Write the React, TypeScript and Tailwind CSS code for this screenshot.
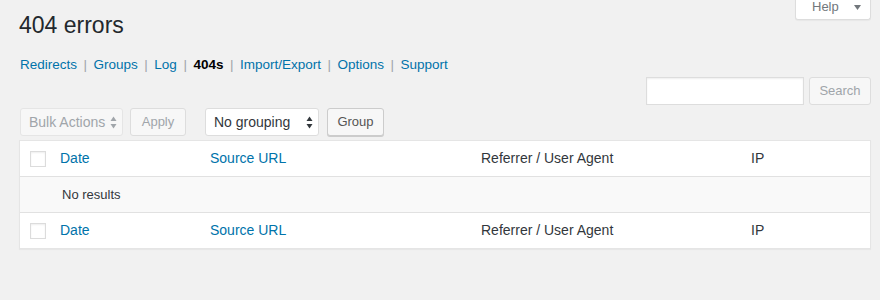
const font = { fontFamily: '"Liberation Sans", Arial, sans-serif' };

const tabs = [
  { label: "Redirects" },
  { label: "Groups" },
  { label: "Log" },
  { label: "404s", current: true },
  { label: "Import/Export" },
  { label: "Options" },
  { label: "Support" },
];

function Arrows({ color }: { color: string }) {
  return (
    <svg width="7" height="13" viewBox="0 0 7 13" className="shrink-0">
      <path d="M3.5 0.5 L6.5 5 L0.5 5 Z" fill={color} />
      <path d="M0.5 8 L6.5 8 L3.5 12.5 Z" fill={color} />
    </svg>
  );
}

function HeadRow({ top }: { top?: boolean }) {
  return (
    <div
      className={`flex h-[36px] items-center text-[14px] ${
        top ? "border-b border-[#e1e1e1]" : "border-t border-[#e1e1e1]"
      }`}
    >
      <div className="flex w-[40px] shrink-0 pl-[10px]">
        <span className="h-[16px] w-[16px] border border-[#dcdcdc] bg-white shadow-[inset_0_1px_2px_rgba(0,0,0,0.07)]" />
      </div>
      <div className="w-[150px] shrink-0 text-[#0073aa]">Date</div>
      <div className="w-[271px] shrink-0 text-[#0073aa]">Source URL</div>
      <div className="w-[270px] shrink-0 text-[#32373c]">Referrer / User Agent</div>
      <div className="flex-1 text-[#32373c]">IP</div>
    </div>
  );
}

export default function App() {
  return (
    <div className="min-h-[300px] bg-[#f1f1f1] pl-[19px] pr-[9px]" style={font}>
      <div className="flex items-start justify-between">
        <h1 className="mt-[10px] text-[23px] leading-[30px] font-normal text-[#23282d]">404 errors</h1>
        <div className="-mt-[3px] flex h-[23px] w-[76px] items-end rounded-b-[3px] border border-t-0 border-[#dddddd] bg-white pb-[4px] pl-[16px] text-[13px] leading-[16px] text-[#72777c] shadow-[0_1px_1px_rgba(0,0,0,0.04)]">
          <span>Help</span>
          <svg width="7" height="5" viewBox="0 0 7 5" className="mb-[5px] ml-[15px]">
            <path d="M0 0 L7 0 L3.5 5 Z" fill="#72777c" />
          </svg>
        </div>
      </div>

      <div className="mt-[15px] flex h-[20px] items-center pl-[1px] text-[13.5px] leading-[20px]">
        {tabs.map((t, i) => (
          <div key={t.label} className="flex items-center">
            <span className={t.current ? "font-bold text-black" : "text-[#0073aa]"}>{t.label}</span>
            {i < tabs.length - 1 && <span className="mx-[6.5px] text-[#a0a5aa]">|</span>}
          </div>
        ))}
      </div>

      <div className="mt-[2px] flex justify-end gap-[5px]">
        <div className="h-[28px] w-[158px] border border-[#dddddd] bg-white shadow-[inset_0_1px_2px_rgba(0,0,0,0.07)]" />
        <button className="h-[28px] w-[62px] rounded-[3px] border border-[#dddddd] bg-[#f7f7f7] text-[13px] text-[#a0a5aa]">
          Search
        </button>
      </div>

      <div className="mt-[3px] flex h-[28px] items-center pl-[1px]">
        <div className="flex h-[28px] w-[103px] items-center justify-between rounded-[3px] border border-[#e5e5e5] bg-[#f7f7f7] pr-[5px] pl-[8px] text-[14px] text-[#a0a5aa]">
          <span>Bulk Actions</span>
          <Arrows color="#a0a5aa" />
        </div>
        <button className="ml-[7px] h-[28px] w-[56px] rounded-[3px] border border-[#dddddd] bg-[#f7f7f7] text-[13px] text-[#a0a5aa]">
          Apply
        </button>
        <div className="ml-[19px] flex h-[28px] w-[114px] items-center justify-between rounded-[3px] border border-[#dddddd] bg-white pr-[5px] pl-[8px] text-[14px] text-[#32373c]">
          <span>No grouping</span>
          <Arrows color="#32373c" />
        </div>
        <button className="ml-[8px] h-[28px] w-[57px] rounded-[3px] border border-[#cccccc] bg-[#f7f7f7] text-[13px] text-[#555555] shadow-[0_1px_0_#cccccc]">
          Group
        </button>
      </div>

      <div className="mt-[4px] border border-[#e5e5e5] bg-white shadow-[0_1px_1px_rgba(0,0,0,0.04)]">
        <HeadRow top />
        <div className="flex h-[35px] items-center bg-[#f9f9f9] pl-[42px] text-[13px] text-[#32373c]">
          No results
        </div>
        <HeadRow />
      </div>
    </div>
  );
}
